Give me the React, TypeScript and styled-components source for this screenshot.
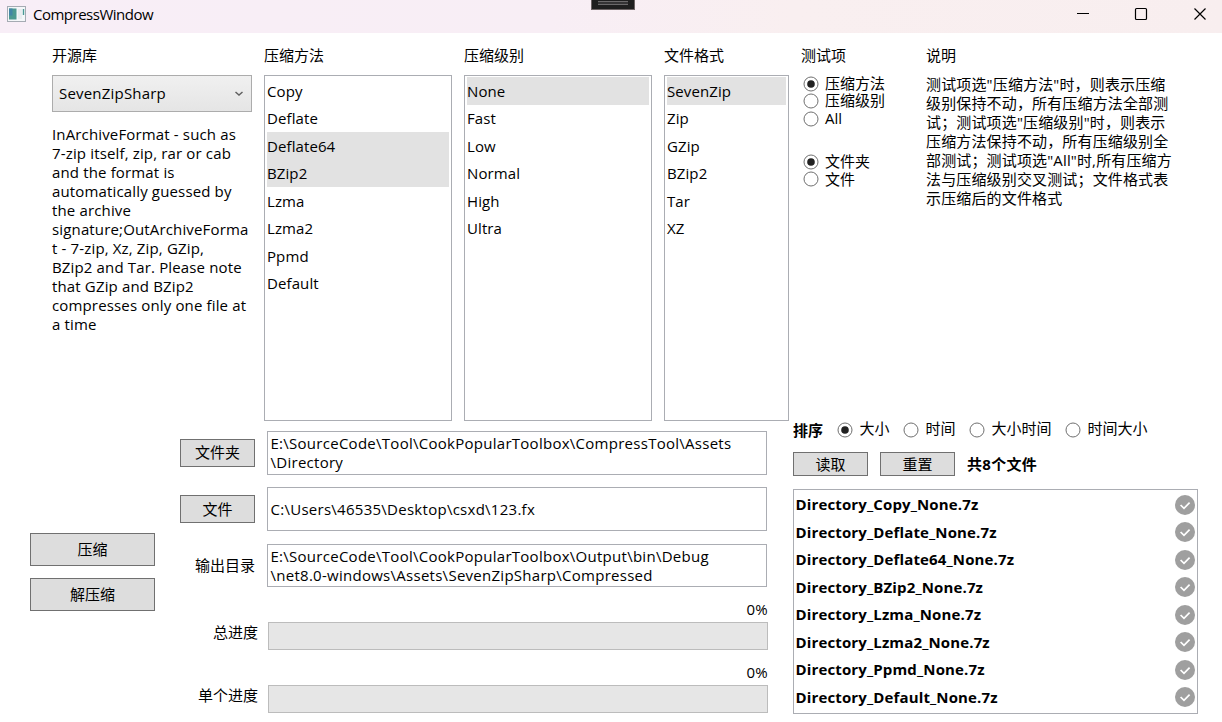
import React from "react";
import styled, { createGlobalStyle } from "styled-components";

const GlobalStyle = createGlobalStyle`
  * { box-sizing: border-box; }
  body {
    margin: 0;
    background: #fff;
    color: #000;
    font: 15px/19px "Open Sans", "Noto Sans CJK SC", sans-serif;
  }
`;

const Window = styled.div`
  width: 1222px;
  height: 722px;
  overflow: hidden;
  display: flex;
  flex-direction: column;
  position: relative;
`;

const TitleBar = styled.header`
  height: 33px;
  flex: none;
  display: flex;
  align-items: center;
  background: linear-gradient(90deg, #f8eef7 0%, #f8eef5 45%, #f9eff0 65%, #f8eeef 100%);
`;

const AppIcon = styled.svg`
  margin: -5px 7px 0 7px;
`;

const Title = styled.h1`
  margin: -5px auto 0 0;
  font-size: 15px;
  font-weight: 400;
  letter-spacing: -0.5px;
`;

const Controls = styled.svg`
  flex: none;
`;

const DebugHandle = styled.div`
  position: absolute;
  left: 591px;
  top: 0;
  width: 44px;
  height: 10px;
  background: #1f1f1f;
  border: 1px solid #6d6465;
  border-top: 0;
  padding: 1px 6px;
`;

const Grip = styled.div`
  height: 4px;
  background: #353435;
  border-top: 1px solid #6b696a;
  border-bottom: 1px solid #6b696a;
`;

const TopArea = styled.section`
  height: 388px;
  flex: none;
  display: flex;
  padding: 12px 0 0 52px;
`;

const Column = styled.div<{ $w: number; $gap?: number }>`
  width: ${(p) => p.$w}px;
  margin-right: ${(p) => p.$gap ?? 12}px;
  display: flex;
  flex-direction: column;
  flex: none;
`;

const Heading = styled.div`
  height: 30px;
  line-height: 20px;
  flex: none;
`;

const Combo = styled.div`
  height: 37px;
  padding: 0 7px 0 6px;
  display: flex;
  align-items: center;
  justify-content: space-between;
  border: 1px solid #acacac;
  background: linear-gradient(#f0f0f0, #e5e5e5);
  letter-spacing: 0.2px;
`;

const Lines = styled.div<{ $top: number }>`
  margin-top: ${(p) => p.$top}px;
  letter-spacing: 0.15px;
  white-space: nowrap;
`;

const Line = styled.div`
  height: 19px;
`;

const ListBox = styled.div`
  flex: 1;
  border: 1px solid #abadb3;
  padding: 1px 2px;
  min-height: 0;
`;

const ListRow = styled.div<{ $on?: boolean }>`
  height: 27.5px;
  padding-top: 0.5px;
  line-height: 27px;
  letter-spacing: 0.1px;
  background: ${(p) => (p.$on ? "#e2e2e2" : "transparent")};
`;

const RadioGroup = styled.div<{ $top?: number }>`
  margin-top: ${(p) => p.$top ?? 0}px;
  padding-left: 1.5px;
`;

const RadioLabel = styled.label`
  display: flex;
  align-items: center;
  gap: 6.4px;
  height: 17.5px;
  white-space: nowrap;
`;

const RadioText = styled.span<{ $dy: number }>`
  position: relative;
  top: ${(p) => p.$dy}px;
  line-height: 17px;
`;

const BottomArea = styled.section`
  flex: 1;
  display: flex;
`;

const Actions = styled.div`
  width: 180px;
  padding: 112px 0 0 30px;
  display: flex;
  flex-direction: column;
  gap: 12px;
`;

const Button = styled.button<{ $w: number; $h: number }>`
  width: ${(p) => p.$w}px;
  height: ${(p) => p.$h}px;
  flex: none;
  padding: 0 0 1px;
  border: 1px solid #707070;
  background: #ddd;
  color: #000;
  font: inherit;
  line-height: 20px;
`;

const Paths = styled.div`
  width: 613px;
  padding-top: 10px;
`;

const PathRow = styled.div`
  height: 43.5px;
  display: flex;
  align-items: center;
  gap: 12px;
  margin-bottom: 12.75px;
`;

const PathLabel = styled.div`
  width: 75px;
  text-align: right;
`;

const PathBox = styled.div`
  width: 500px;
  height: 43.5px;
  padding: 0.8px 2.5px 0;
  border: 1px solid #abadb3;
  display: flex;
  flex-direction: column;
  justify-content: center;
  white-space: nowrap;
  letter-spacing: 0.27px;
`;

const ProgressRow = styled.div`
  height: 63px;
  display: grid;
  grid-template-columns: 78px 500px;
  grid-template-rows: 22px 28px;
  column-gap: 10px;
  text-align: right;
`;

const Percent = styled.div`
  grid-column: 2;
  line-height: 18px;
  letter-spacing: 0.3px;
`;

const ProgressLabel = styled.div`
  line-height: 21px;
`;

const Track = styled.div`
  border: 1px solid #bcbcbc;
  background: #e6e6e6;
`;

const Results = styled.div`
  width: 405px;
`;

const SortRow = styled.div`
  height: 18px;
  display: flex;
  align-items: center;
  gap: 14px;
`;

const Strong = styled.span`
  font-weight: 700;
  white-space: nowrap;
  letter-spacing: 0.3px;
`;

const SortLabel = styled(Strong)`
  letter-spacing: 0;
`;

const SortOptions = styled.div`
  display: flex;
  gap: 13.6px;
  padding-bottom: 1px;
`;

const ResultTools = styled.div`
  margin: 13px 0 13px;
  display: flex;
  align-items: center;
  gap: 12px;
`;

const FileList = styled(ListBox)`
  height: 225px;
  padding: 1px 2px 1px 1.5px;
`;

const FileRow = styled.div`
  height: 27.5px;
  display: flex;
  align-items: center;
  justify-content: space-between;
  font-weight: 700;
  letter-spacing: 0.14px;
`;

function Radio({ text, on, dy = -1 }: { text: string; on?: boolean; dy?: number }) {
  return (
    <RadioLabel>
      <svg width="16" height="16" viewBox="0 0 16 16">
        <circle cx="8" cy="8" r="7" fill="#fff" stroke="#707070" />
        {on && <circle cx="8" cy="8" r="3.8" fill="#212121" />}
      </svg>
      <RadioText $dy={dy}>{text}</RadioText>
    </RadioLabel>
  );
}

function OptionList({ items, selected }: { items: string[]; selected: string[] }) {
  return (
    <ListBox>
      {items.map((item) => (
        <ListRow key={item} $on={selected.includes(item)}>
          {item}
        </ListRow>
      ))}
    </ListBox>
  );
}

const description = [
  "InArchiveFormat - such as",
  "7-zip itself, zip, rar or cab",
  "and the format is",
  "automatically guessed by",
  "the archive",
  "signature;OutArchiveForma",
  "t - 7-zip, Xz, Zip, GZip,",
  "BZip2 and Tar. Please note",
  "that GZip and BZip2",
  "compresses only one file at",
  "a time",
];

const notes = [
  '测试项选"压缩方法"时，则表示压缩',
  "级别保持不动，所有压缩方法全部测",
  '试；测试项选"压缩级别"时，则表示',
  "压缩方法保持不动，所有压缩级别全",
  '部测试；测试项选"All"时,所有压缩方',
  "法与压缩级别交叉测试；文件格式表",
  "示压缩后的文件格式",
];

const methods = ["Copy", "Deflate", "Deflate64", "BZip2", "Lzma", "Lzma2", "Ppmd", "Default"];

export default function App() {
  return (
    <Window>
      <GlobalStyle />
      <TitleBar>
        <AppIcon width="19" height="16" viewBox="0 0 19 16">
          <rect x="0.5" y="0.5" width="18" height="15" fill="#f4f7f9" stroke="#a5abb3" />
          <rect x="2" y="2.5" width="7.5" height="11" fill="#4d9a92" />
          <rect x="2" y="2.5" width="3.5" height="7" fill="#4386a6" />
          <path d="M11 3h4v10h-4z" fill="#e9edf0" />
          <path d="M16.5 3v6" stroke="#4a9a96" strokeWidth="1.4" />
        </AppIcon>
        <Title>CompressWindow</Title>
        <Controls width="146" height="33" viewBox="0 0 146 33" fill="none" stroke="#000">
          <path d="M1 13.5h12" />
          <rect x="59.5" y="8.5" width="11" height="11" rx="1" strokeWidth="1.2" />
          <path d="M118.5 8.5l11 11M129.5 8.5l-11 11" strokeWidth="1.2" />
        </Controls>
      </TitleBar>
      <DebugHandle>
        <Grip />
      </DebugHandle>

      <TopArea>
        <Column $w={200}>
          <Heading>开源库</Heading>
          <Combo>
            SevenZipSharp
            <svg width="10" height="8" viewBox="0 0 10 8">
              <path d="M1.5 2l3.5 3 3.5-3" fill="none" stroke="#606060" strokeWidth="1.5" />
            </svg>
          </Combo>
          <Lines $top={13}>
            {description.map((line) => (
              <Line key={line}>{line}</Line>
            ))}
          </Lines>
        </Column>
        <Column $w={188}>
          <Heading>压缩方法</Heading>
          <OptionList items={methods} selected={["Deflate64", "BZip2"]} />
        </Column>
        <Column $w={188}>
          <Heading>压缩级别</Heading>
          <OptionList items={["None", "Fast", "Low", "Normal", "High", "Ultra"]} selected={["None"]} />
        </Column>
        <Column $w={125}>
          <Heading>文件格式</Heading>
          <OptionList items={["SevenZip", "Zip", "GZip", "BZip2", "Tar", "XZ"]} selected={["SevenZip"]} />
        </Column>
        <Column $w={113}>
          <Heading>测试项</Heading>
          <RadioGroup>
            <Radio text="压缩方法" on dy={0} />
            <Radio text="压缩级别" />
            <Radio text="All" dy={0} />
          </RadioGroup>
          <RadioGroup $top={25.5}>
            <Radio text="文件夹" on dy={0} />
            <Radio text="文件" dy={0} />
          </RadioGroup>
        </Column>
        <Column $w={250} $gap={0}>
          <Heading>说明</Heading>
          <Lines $top={0}>
            {notes.map((line) => (
              <Line key={line}>{line}</Line>
            ))}
          </Lines>
        </Column>
      </TopArea>

      <BottomArea>
        <Actions>
          <Button $w={125} $h={33}>压缩</Button>
          <Button $w={125} $h={33}>解压缩</Button>
        </Actions>
        <Paths>
          <PathRow>
            <Button $w={75} $h={28}>文件夹</Button>
            <PathBox>
              <Line>{"E:\\SourceCode\\Tool\\CookPopularToolbox\\CompressTool\\Assets"}</Line>
              <Line>{"\\Directory"}</Line>
            </PathBox>
          </PathRow>
          <PathRow>
            <Button $w={75} $h={28}>文件</Button>
            <PathBox>
              <Line>{"C:\\Users\\46535\\Desktop\\csxd\\123.fx"}</Line>
            </PathBox>
          </PathRow>
          <PathRow>
            <PathLabel>输出目录</PathLabel>
            <PathBox>
              <Line>{"E:\\SourceCode\\Tool\\CookPopularToolbox\\Output\\bin\\Debug"}</Line>
              <Line>{"\\net8.0-windows\\Assets\\SevenZipSharp\\Compressed"}</Line>
            </PathBox>
          </PathRow>
          <ProgressRow>
            <Percent>0%</Percent>
            <ProgressLabel>总进度</ProgressLabel>
            <Track />
          </ProgressRow>
          <ProgressRow>
            <Percent>0%</Percent>
            <ProgressLabel>单个进度</ProgressLabel>
            <Track />
          </ProgressRow>
        </Paths>
        <Results>
          <SortRow>
            <SortLabel>排序</SortLabel>
            <SortOptions>
              <Radio text="大小" on />
              <Radio text="时间" />
              <Radio text="大小时间" />
              <Radio text="时间大小" />
            </SortOptions>
          </SortRow>
          <ResultTools>
            <Button $w={75} $h={24}>读取</Button>
            <Button $w={75} $h={24}>重置</Button>
            <Strong>共8个文件</Strong>
          </ResultTools>
          <FileList>
            {methods.map((m) => (
              <FileRow key={m}>
                Directory_{m}_None.7z
                <svg width="20" height="20" viewBox="0 0 20 20">
                  <circle cx="10" cy="10" r="10" fill="#9f9f9f" />
                  <path d="M5.6 10l3.4 3.4 5.6-5.7" fill="none" stroke="#fff" strokeWidth="1.7" />
                </svg>
              </FileRow>
            ))}
          </FileList>
        </Results>
      </BottomArea>
    </Window>
  );
}
